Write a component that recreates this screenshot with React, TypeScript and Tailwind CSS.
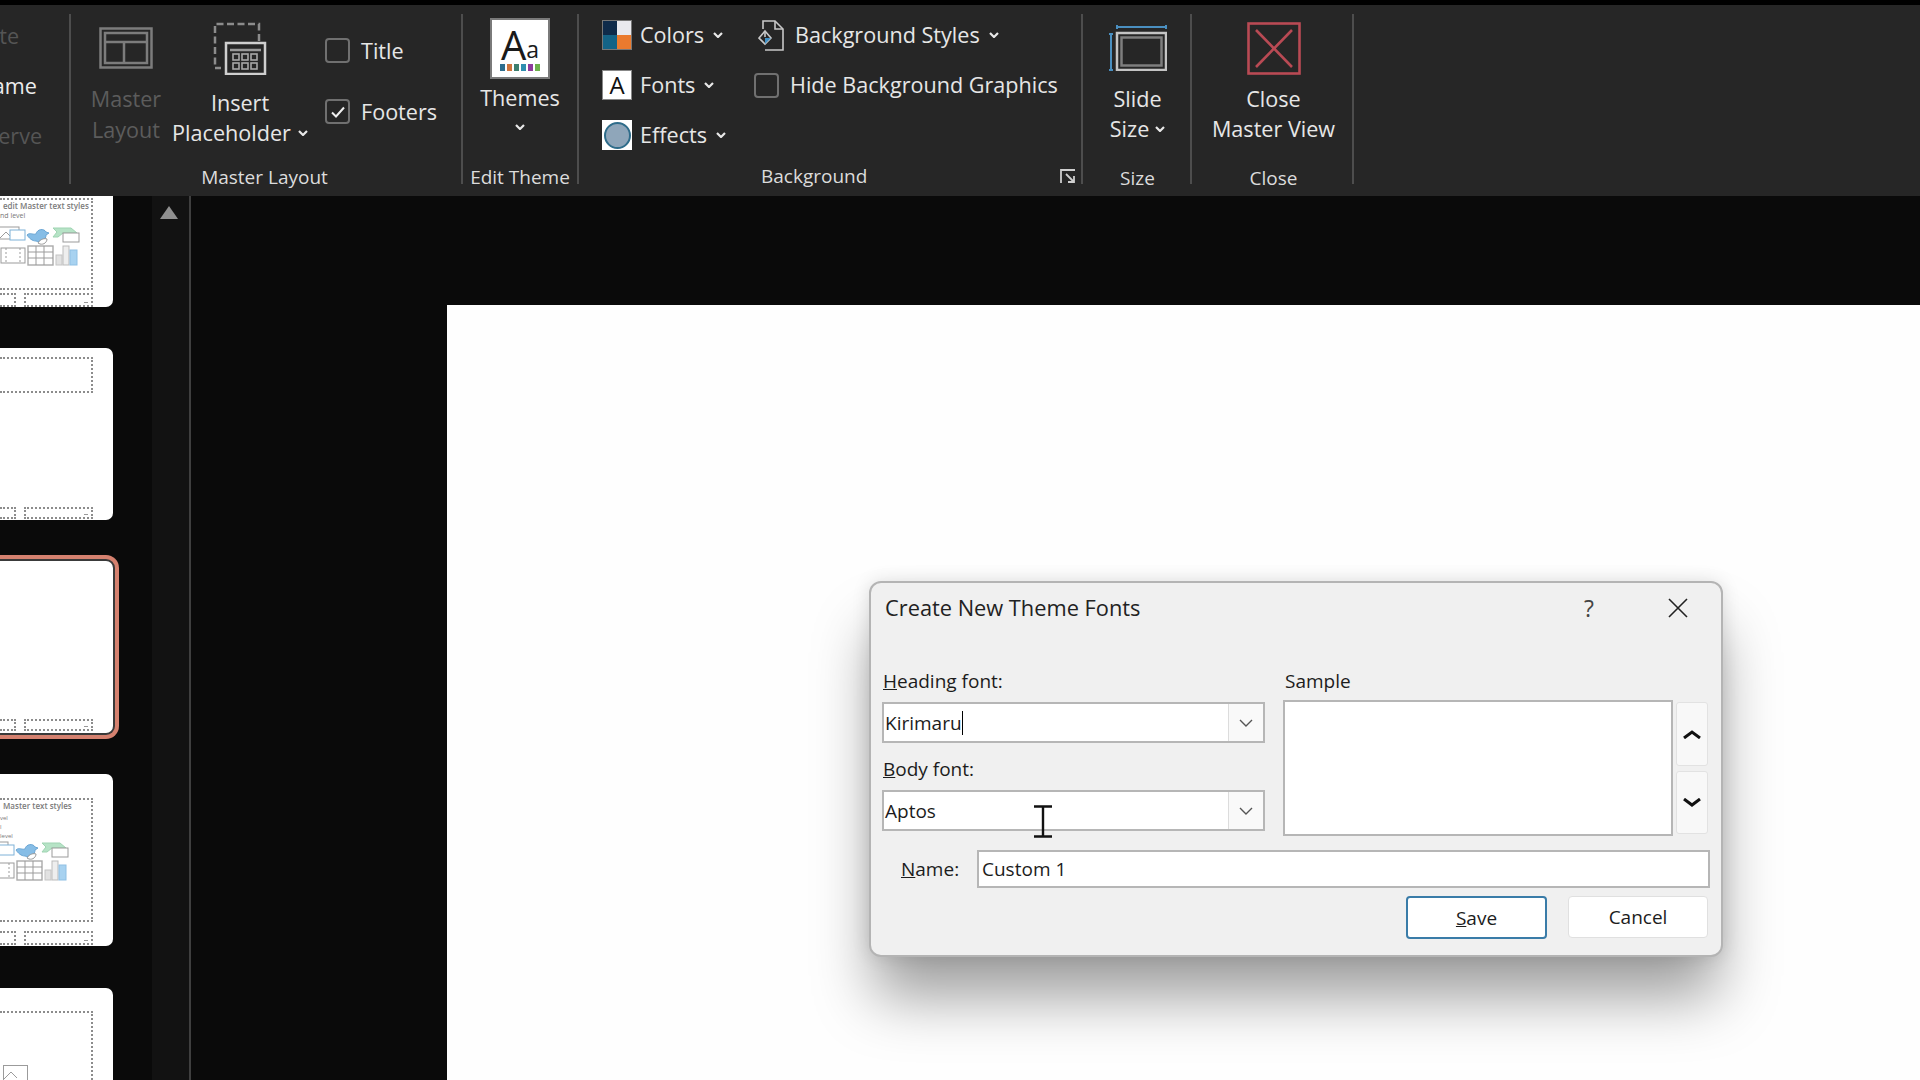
import type { ReactNode } from "react";

const Chevron = ({ className = "" }: { className?: string }) => (
  <svg viewBox="0 0 10 6" className={`w-[10px] h-[6px] shrink-0 ${className}`} fill="none" stroke="#e8e8e8" strokeWidth="2.2">
    <path d="M1 1l4 4 4-4" />
  </svg>
);

const Check = ({ checked = false }: { checked?: boolean }) => (
  <div className="w-[25px] h-[25px] rounded-[4px] border-2 border-[#707070] flex items-center justify-center shrink-0">
    {checked && (
      <svg viewBox="0 0 16 16" className="w-[16px] h-[16px]" fill="none" stroke="#f0f0f0" strokeWidth="2">
        <path d="M2 8.5l4 4 8-9" />
      </svg>
    )}
  </div>
);

const Sep = () => <div className="w-[2px] my-[9px] mb-[12px] bg-[#4d4d4d] shrink-0" />;

const GroupLabel = ({ children }: { children: ReactNode }) => (
  <div className="mt-auto mb-[3px] h-[30px] leading-[30px] text-center text-[19px] text-[#dcdcdc] whitespace-nowrap">{children}</div>
);

const MasterLayoutIcon = () => (
  <svg viewBox="0 0 54 42" className="w-[54px] h-[42px]" fill="none" stroke="#7c7c7c" strokeWidth="2.5">
    <rect x="1.5" y="1.5" width="51" height="39" />
    <rect x="6" y="6" width="42" height="30" />
    <path d="M6 15h42M25 15v21" />
  </svg>
);

const PlaceholderIcon = () => (
  <svg viewBox="0 0 54 53" className="w-[54px] h-[53px]" fill="none" stroke="#b4b4b4" strokeWidth="2.5">
    <path d="M46 19V2H2v44h6" stroke="#8c8c8c" strokeDasharray="7 3.5" />
    <rect x="13" y="21" width="39" height="31" stroke="#cfcfcf" />
    <path d="M17 28h31" stroke="#9a9a9a" />
    <g strokeWidth="1.6" stroke="#a8a8a8">
      <rect x="20" y="32" width="6" height="6" />
      <rect x="29" y="32" width="6" height="6" />
      <rect x="38" y="32" width="6" height="6" />
      <rect x="20" y="41" width="6" height="6" />
      <rect x="29" y="41" width="6" height="6" />
      <rect x="38" y="41" width="6" height="6" />
    </g>
  </svg>
);

const ThemesIcon = () => (
  <div className="w-[60px] h-[61px] bg-white border-2 border-[#7a7a7a] flex flex-col items-center pt-[8px]">
    <div className="flex items-end h-[33px] text-[#1a1a1a] leading-none">
      <span className="text-[40px] leading-[33px]">A</span>
      <span className="text-[23px] leading-[24px]">a</span>
    </div>
    <div className="flex gap-[2px] mt-[3px]">
      <div className="w-[5px] h-[7px] bg-[#2f6f8f]" />
      <div className="w-[5px] h-[7px] bg-[#d0743c]" />
      <div className="w-[5px] h-[7px] bg-[#3d7f6e]" />
      <div className="w-[5px] h-[7px] bg-[#2f8fb0]" />
      <div className="w-[5px] h-[7px] bg-[#8e3a9c]" />
      <div className="w-[5px] h-[7px] bg-[#6eb04c]" />
    </div>
  </div>
);

const ColorsIcon = () => (
  <div className="w-[30px] h-[30px] grid grid-cols-2 border border-[#777]">
    <div className="bg-[#0f2b4a]" />
    <div className="bg-[#e9e9ee]" />
    <div className="bg-[#146386]" />
    <div className="bg-[#ea7a2e]" />
  </div>
);

const FontsIcon = () => (
  <div className="w-[30px] h-[30px] bg-white border border-[#888] flex items-center justify-center text-[24px] leading-none text-[#111]">A</div>
);

const EffectsIcon = () => (
  <div className="w-[30px] h-[30px] bg-white flex items-center justify-center">
    <div className="w-[27px] h-[27px] rounded-full bg-[#8fa6ba] border-2 border-[#2e6c8a]" />
  </div>
);

const BgStylesIcon = () => (
  <svg viewBox="0 0 26 31" className="w-[26px] h-[31px]" fill="none" stroke="#c8c8c8" strokeWidth="1.6">
    <path d="M5 9V1h12l8 8v21H7" />
    <path d="M17 1v8h8" />
    <path d="M7 11l6 7-6 6-6-6z" />
    <path d="M7 18l6 0-6 6z" fill="#3f8fc4" stroke="none" />
    <path d="M7 11v6" />
  </svg>
);

const LauncherIcon = () => (
  <svg viewBox="0 0 16 15" className="w-[16px] h-[15px]" fill="none" stroke="#cfcfcf" strokeWidth="1.8">
    <path d="M15 1H1v13" />
    <path d="M6 5l8 8M14 7v6H8" />
  </svg>
);

const SlideSizeIcon = () => (
  <svg viewBox="0 0 58 46" className="w-[58px] h-[46px]" fill="none">
    <path d="M8 2h49M8 0v4M57 0v4" stroke="#4a8fc0" strokeWidth="2" />
    <path d="M2 9v37M0 9h4M0 45h4" stroke="#4a8fc0" strokeWidth="2" />
    <rect x="8" y="8" width="49" height="37" stroke="#c4c4c4" strokeWidth="2.5" />
    <rect x="12.5" y="12.5" width="40" height="28" stroke="#7e7e7e" strokeWidth="2.5" />
  </svg>
);

const CloseMasterIcon = () => (
  <svg viewBox="0 0 54 53" className="w-[54px] h-[53px]" fill="none" stroke="#b94a54" strokeWidth="2.6">
    <rect x="1.5" y="1.5" width="51" height="50" />
    <path d="M9 8l36 37M45 8L9 45" />
  </svg>
);

const SmallRow = ({ icon, text, chevron }: { icon: ReactNode; text: string; chevron: string }) => (
  <div className="flex items-center h-[30px]">
    {icon}
    <span className="ml-[8px] text-[#e6e6e6] whitespace-nowrap">{text}</span>
    <Chevron className={chevron} />
  </div>
);

const Ribbon = () => (
  <div className="flex h-[191px] bg-[#262626] shrink-0 text-[21.6px] leading-[30px] text-[#e6e6e6]">
    <div className="w-[69px] overflow-hidden shrink-0 flex flex-col pt-[16px] gap-[20px]">
      <div className="-ml-[46px] h-[30px] text-[#555]">Delete</div>
      <div className="-ml-[46px] h-[30px] text-[#ececec]">Rename</div>
      <div className="-ml-[46px] h-[30px] text-[#555]">Preserve</div>
    </div>
    <Sep />

    <div className="w-[390px] flex flex-col shrink-0">
      <div className="flex">
        <div className="ml-[19px] w-[72px] flex flex-col items-center pt-[22px]">
          <MasterLayoutIcon />
          <div className="mt-[14px] text-center leading-[31px] text-[#5c5c5c]">Master<br />Layout</div>
        </div>
        <div className="ml-[3px] w-[150px] flex flex-col items-center pt-[17px]">
          <PlaceholderIcon />
          <div className="mt-[13px] text-center">Insert</div>
          <div className="flex items-center whitespace-nowrap">
            Placeholder
            <Chevron className="ml-[7px]" />
          </div>
        </div>
        <div className="ml-[10px] flex flex-col pt-[33px] gap-[36px]">
          <div className="flex items-center gap-[11px] h-[25px]">
            <Check />
            <span>Title</span>
          </div>
          <div className="flex items-center gap-[11px] h-[25px]">
            <Check checked />
            <span>Footers</span>
          </div>
        </div>
      </div>
      <div className="mt-auto mb-[4px] pr-[3px] h-[30px] leading-[30px] text-center text-[19px] text-[#dcdcdc]">Master Layout</div>
    </div>
    <Sep />

    <div className="w-[114px] flex flex-col items-center shrink-0 pt-[13px]">
      <ThemesIcon />
      <div className="mt-[4px]">Themes</div>
      <Chevron className="mt-[11px]" />
      <div className="mt-auto mb-[4px] h-[30px] leading-[30px] text-center text-[19px] text-[#dcdcdc] whitespace-nowrap">Edit Theme</div>
    </div>
    <Sep />

    <div className="w-[502px] flex flex-col shrink-0">
      <div className="flex pl-[23px] pt-[15px]">
        <div className="w-[156px] flex flex-col gap-[20px]">
          <SmallRow icon={<ColorsIcon />} text="Colors" chevron="ml-[9px]" />
          <SmallRow icon={<FontsIcon />} text="Fonts" chevron="ml-[9px]" />
          <SmallRow icon={<EffectsIcon />} text="Effects" chevron="ml-[9px]" />
        </div>
        <div className="flex flex-col gap-[20px]">
          <div className="flex items-center h-[30px]">
            <BgStylesIcon />
            <span className="ml-[11px] whitespace-nowrap">Background Styles</span>
            <Chevron className="ml-[9px]" />
          </div>
          <div className="flex items-center h-[30px] -ml-[4px]">
            <Check />
            <span className="ml-[11px] whitespace-nowrap">Hide Background Graphics</span>
          </div>
        </div>
      </div>
      <div className="mt-auto flex items-center h-[30px] mb-[5px] pl-[182px] pr-[5px] text-[19px] text-[#dcdcdc]">
        Background
        <div className="ml-auto"><LauncherIcon /></div>
      </div>
    </div>
    <Sep />

    <div className="w-[107px] flex flex-col items-center shrink-0 pt-[20px] pl-[2px]">
      <SlideSizeIcon />
      <div className="mt-[13px]">Slide</div>
      <div className="flex items-center">Size<Chevron className="ml-[6px]" /></div>
      <GroupLabel>Size</GroupLabel>
    </div>
    <Sep />

    <div className="w-[160px] flex flex-col items-center shrink-0 pt-[17px] pl-[3px]">
      <CloseMasterIcon />
      <div className="mt-[9px]">Close</div>
      <div className="whitespace-nowrap">Master View</div>
      <GroupLabel>Close</GroupLabel>
    </div>
    <Sep />
  </div>
);

// the clip art block that sits in the content placeholder of a layout thumb
const ClipArt = ({ className = "" }: { className?: string }) => (
  <svg viewBox="0 0 84 42" className={`w-[84px] h-[42px] shrink-0 ${className}`} fill="none" stroke="#9b9b9b" strokeWidth="1">
    <rect x="0" y="3" width="20" height="12" />
    <path d="M1 14l6-6 5 5" />
    <rect x="11" y="6" width="15" height="10" fill="#fff" stroke="#7fb2d8" />
    <path d="M28 11c3-3 6 0 9-1 1-5 8-6 10-2l3 1-3 2c0 5-5 8-10 6-4 0-7-3-9-6z" fill="#86bde6" stroke="#6ba6d4" />
    <path d="M39 19c2-4 7-5 9-4 0 3-3 6-7 5z" fill="#fff" />
    <path d="M54 4h18l6 5H64l-5 4h-5l4-5z" fill="#b6e3c6" stroke="#9fd4b2" />
    <rect x="64" y="9" width="16" height="9" fill="#fff" />
    <rect x="2" y="24" width="24" height="15" />
    <path d="M7 24v15M21 24v15" strokeDasharray="2 2" />
    <rect x="29" y="22" width="25" height="19" stroke="#aaa" strokeWidth="1.4" />
    <path d="M29 28h25M29 34h25M37 22v19M45 22v19" />
    <rect x="57" y="31" width="6" height="10" fill="#e2e2e2" stroke="#c4c4c4" />
    <rect x="64" y="22" width="6" height="19" fill="#eee" stroke="#bbb" />
    <rect x="71" y="26" width="7" height="15" fill="#a8d2f0" stroke="#8fc0e4" />
  </svg>
);

const Footer = ({ className = "" }: { className?: string }) => (
  <div className={`flex gap-[8px] ${className}`}>
    <div className="w-[16px] h-full border-2 border-l-0 border-dotted border-[#8c8c8c]" />
    <div className="w-[69px] h-full border-2 border-dotted border-[#8c8c8c] flex items-end justify-end pr-[3px] pb-[2px]">
      <div className="w-[4px] h-[1px] bg-[#999]" />
    </div>
  </div>
);

const SlideThumb = ({ className = "", children }: { className?: string; children: ReactNode }) => (
  <div className={`w-[113px] bg-white rounded-r-[7px] pr-[20px] flex flex-col shrink-0 ${className}`}>{children}</div>
);

const ThumbPane = () => (
  <div className="flex shrink-0 bg-[#0a0a0a]">
    <div className="w-[152px] flex flex-col overflow-hidden">
      <SlideThumb className="h-[111px] pt-[2px] rounded-tr-none">
        <div className="h-[92px] border-2 border-l-0 border-dotted border-[#8c8c8c] text-[#7b7b7b] text-[8px] leading-[11px] overflow-hidden">
          <div className="pl-[3px] whitespace-nowrap font-semibold">edit Master text styles</div>
          <div className="text-[7px] text-[#777] leading-[9px] whitespace-nowrap">nd level</div>
          <ClipArt className="-ml-[1px] mt-[4px]" />
        </div>
        <Footer className="h-[14px] mt-[3px]" />
      </SlideThumb>

      <SlideThumb className="h-[172px] mt-[41px] pt-[9px]">
        <div className="h-[36px] border-2 border-l-0 border-dotted border-[#8c8c8c]" />
        <Footer className="h-[12px] mt-auto mb-[1px]" />
      </SlideThumb>

      <SlideThumb className="h-[172px] mt-[41px] shadow-[0_0_0_2px_#3a3a3a,0_0_0_6px_#d5816f]">
        <Footer className="h-[12px] mt-auto mb-[2px]" />
      </SlideThumb>

      <SlideThumb className="h-[172px] mt-[41px] pt-[24px]">
        <div className="h-[124px] border-2 border-l-0 border-dotted border-[#8c8c8c] text-[#7b7b7b] text-[8px] leading-[11px] overflow-hidden">
          <div className="pl-[3px] whitespace-nowrap font-semibold">Master text styles</div>
          <div className="text-[6px] leading-[9px] mt-[3px]">vel</div>
          <div className="text-[6px] leading-[9px]">l</div>
          <div className="text-[6px] leading-[9px]">level</div>
          <ClipArt className="-ml-[12px] -mt-[2px]" />
        </div>
        <Footer className="h-[14px] mt-[9px]" />
      </SlideThumb>

      <SlideThumb className="h-[172px] mt-[42px] pt-[23px]">
        <div className="h-[120px] border-2 border-l-0 border-dotted border-[#8c8c8c] overflow-hidden pt-[52px] pl-[3px]">
          <svg viewBox="0 0 25 16" className="w-[25px] h-[16px]" fill="none" stroke="#9b9b9b">
            <rect x="0.5" y="0.5" width="24" height="15" />
            <path d="M1 14l7-7 6 6" />
          </svg>
        </div>
      </SlideThumb>
    </div>
    <div className="w-[39px] bg-[#121212] border-r-2 border-[#3f3f3f] pt-[10px] pl-[8px]">
      <div className="w-0 h-0 border-l-[9px] border-r-[9px] border-b-[13px] border-l-transparent border-r-transparent border-b-[#8f8f8f]" />
    </div>
  </div>
);

const Combo = ({ children }: { children: ReactNode }) => (
  <div className="h-[41px] flex bg-white border-2 border-[#b6b6b6]">
    <div className="flex-1 flex items-center pl-[1px] pt-[1px]">{children}</div>
    <div className="w-[35px] bg-[#f9f9f9] border-l border-[#dcdcdc] flex items-center justify-center">
      <svg viewBox="0 0 14 8" className="w-[14px] h-[8px]" fill="none" stroke="#555" strokeWidth="1.4">
        <path d="M1 1l6 6 6-6" />
      </svg>
    </div>
  </div>
);

const SpinButton = ({ up, className }: { up?: boolean; className: string }) => (
  <div className={`w-[32px] bg-[#f8f8f8] border border-[#e2e2e2] rounded-[3px] flex items-center justify-center ${className}`}>
    <svg viewBox="0 0 18 9" className="w-[18px] h-[9px]" fill="none" stroke="#111" strokeWidth="3">
      <path d={up ? "M1 8l8-6 8 6" : "M1 1l8 6 8-6"} />
    </svg>
  </div>
);

const Dialog = () => (
  <div className="absolute left-[422px] top-[276px] w-[854px] h-[376px] bg-[#f0f0f0] border-2 border-[#b4b4b4] rounded-[12px] shadow-[0_45px_60px_-5px_rgba(0,0,0,0.38),0_0_18px_rgba(0,0,0,0.12)] text-[19px] leading-[30px] text-[#1c1c1c]">
    <div className="h-[50px] flex items-center pl-[14px] pr-[33px]">
      <span className="text-[21.8px] text-[#222]">Create New Theme Fonts</span>
      <span className="ml-auto text-[23px] text-[#444]">?</span>
      <svg viewBox="0 0 20 20" className="ml-[74px] w-[20px] h-[20px]" fill="none" stroke="#222" strokeWidth="1.6">
        <path d="M1 1l18 18M19 1L1 19" />
      </svg>
    </div>

    <div className="flex pl-[11px] pt-[33px]">
      <div className="w-[383px]">
        <div className="pl-[1px] mb-[6px]"><span className="underline">H</span>eading font:</div>
        <Combo>
          Kirimaru
          <div className="w-[1px] h-[24px] bg-black" />
        </Combo>
        <div className="pl-[1px] mt-[11px] mb-[6px]"><span className="underline">B</span>ody font:</div>
        <Combo>Aptos</Combo>
      </div>
      <div className="ml-[18px] w-[390px]">
        <div className="pl-[2px] mb-[4px]">Sample</div>
        <div className="h-[136px] bg-white border-2 border-[#b6b6b6]" />
      </div>
      <div className="ml-[3px] pt-[36px] flex flex-col gap-[5px]">
        <SpinButton up className="h-[64px]" />
        <SpinButton className="h-[63px]" />
      </div>
    </div>

    <div className="flex items-center mt-[14px] pl-[30px]">
      <div className="w-[76px]"><span className="underline">N</span>ame:</div>
      <div className="w-[733px] h-[38px] bg-white border-2 border-[#b6b6b6] flex items-center pl-[3px]">Custom 1</div>
    </div>

    <div className="flex justify-end gap-[21px] mt-[8px] pr-[13px]">
      <div className="w-[141px] h-[43px] bg-white border-2 border-[#3a7ca8] rounded-[4px] flex items-center justify-center"><span className="underline">S</span>ave</div>
      <div className="w-[140px] h-[42px] bg-white border border-[#e0e0e0] rounded-[4px] flex items-center justify-center">Cancel</div>
    </div>

    {/* mouse cursor */}
    <svg viewBox="0 0 20 33" className="absolute left-[162px] top-[222px] w-[20px] h-[33px]" fill="none" stroke="#111" strokeWidth="2.4">
      <path d="M1 1.5h18M1 31.5h18M10 2v29" />
    </svg>
  </div>
);

export default function App() {
  return (
    <div className="w-[1920px] h-[1080px] overflow-hidden flex flex-col bg-[#0a0a0a] font-['Open_Sans',sans-serif]">
      <div className="h-[5px] bg-black shrink-0" />
      <Ribbon />
      <div className="flex flex-1 min-h-0">
        <ThumbPane />
        <div className="flex-1 pl-[256px] pt-[109px]">
          <div className="relative h-full bg-[#fefefe]">
            <Dialog />
          </div>
        </div>
      </div>
    </div>
  );
}
